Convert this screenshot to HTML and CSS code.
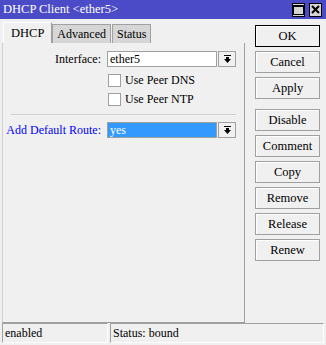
FILE: index.html
```html
<!DOCTYPE html>
<html>
<head>
    <title>DHCP Client &lt;ether5&gt;</title>
    <link rel="stylesheet" href="styles.css">
</head>
<body>
    <div class="titlebar">
        <span class="title">DHCP Client &lt;ether5&gt;</span>
        <div class="winbtns">
            <span class="winbtn">
                <svg width="11" height="10" viewBox="0 0 11 10"><rect x="0.5" y="0.5" width="10" height="9" fill="none" stroke="#000"/><rect x="0" y="0" width="11" height="2" fill="#000"/></svg>
            </span>
            <span class="winbtn">
                <svg width="9" height="9" viewBox="0 0 9 9"><path d="M1 1 L8 8 M8 1 L1 8" stroke="#000" stroke-width="2"/></svg>
            </span>
        </div>
    </div>

    <div class="main">
        <div class="left">
            <div class="tabs">
                <div class="tab active">DHCP</div>
                <div class="tab">Advanced</div>
                <div class="tab">Status</div>
            </div>
            <div class="panel">
                <div class="row">
                    <label class="lbl">Interface:</label>
                    <div class="field">ether5</div>
                    <span class="drop">
                        <svg width="9" height="9" viewBox="0 0 9 9"><rect x="1" y="0" width="7" height="1" fill="#000"/><rect x="3" y="2" width="3" height="2" fill="#000"/><path d="M1 4 L8 4 L4.5 8 Z" fill="#000"/></svg>
                    </span>
                </div>
                <div class="check-row"><span class="box"></span>Use Peer DNS</div>
                <div class="check-row"><span class="box"></span>Use Peer NTP</div>
                <div class="sep"></div>
                <div class="row">
                    <label class="lbl blue">Add Default Route:</label>
                    <div class="field selected">yes</div>
                    <span class="drop">
                        <svg width="9" height="9" viewBox="0 0 9 9"><rect x="1" y="0" width="7" height="1" fill="#000"/><rect x="3" y="2" width="3" height="2" fill="#000"/><path d="M1 4 L8 4 L4.5 8 Z" fill="#000"/></svg>
                    </span>
                </div>
            </div>
        </div>

        <div class="buttons">
            <button class="btn default">OK</button>
            <button class="btn">Cancel</button>
            <button class="btn">Apply</button>
            <button class="btn spaced">Disable</button>
            <button class="btn">Comment</button>
            <button class="btn">Copy</button>
            <button class="btn">Remove</button>
            <button class="btn">Release</button>
            <button class="btn">Renew</button>
        </div>
    </div>

    <div class="statusbar">
        <div class="cell first">enabled</div>
        <div class="cell">Status: bound</div>
    </div>
</body>
</html>
```

FILE: styles.css
```css
body {
    margin: 0;
    width: 326px;
    height: 345px;
    overflow: hidden;
    background-color: #f0f0f0;
    font-family: "Liberation Serif", "Times New Roman", serif;
    font-size: 12px;
    color: #000;
}
.titlebar {
    height: 19px;
    background-color: #4b4bc8;
    color: white;
    display: flex;
    align-items: center;
    justify-content: space-between;
    padding-left: 3px;
    font-size: 12.5px;
}
.winbtns {
    display: flex;
    gap: 4px;
    margin-right: 4px;
}
.winbtn {
    width: 11px;
    height: 12px;
    border: 1px solid #000;
    background: #d4d4d4;
    display: flex;
    align-items: center;
    justify-content: center;
}
.main {
    display: flex;
    height: 304px;
    padding: 3px 0 0 2px;
    box-sizing: border-box;
}
.left {
    width: 243px;
    display: flex;
    flex-direction: column;
}
.tabs {
    display: flex;
    height: 21px;
    padding-left: 1px;
    align-items: flex-end;
}
.tab {
    height: 18px;
    line-height: 18px;
    padding: 0 4px;
    background: #d6d6d6;
    border: 1px solid #a0a0a0;
    border-bottom: none;
    margin-right: 1px;
}
.tab.active {
    height: 20px;
    line-height: 21px;
    background: #f0f0f0;
    border-color: #fff #a0a0a0 #fff #fff;
    padding: 0 7px 0 7px;
    font-size: 12.5px;
    margin-right: 0;
}
.panel {
    height: 278px;
    border: 1px solid #a0a0a0;
    border-top: none;
    border-left-color: #d0d0d0;
    padding: 8px 8px 0 8px;
}
.row {
    display: flex;
    align-items: center;
    height: 16px;
}
.lbl {
    width: 90px;
    flex-shrink: 0;
    display: flex;
    justify-content: flex-end;
    white-space: nowrap;
    margin-right: 6px;
}
.blue {
    color: #0000ff;
}
.field {
    width: 106px;
    height: 14px;
    line-height: 14px;
    background: white;
    border: 1px solid #a0a0a0;
    padding-left: 2px;
}
.field.selected {
    background: #3399ff;
    color: white;
}
.drop {
    width: 16px;
    height: 14px;
    margin-left: 1px;
    border: 1px solid #a0a0a0;
    background: #f0f0f0;
    display: flex;
    align-items: center;
    justify-content: center;
}
.check-row {
    display: flex;
    align-items: center;
    height: 13px;
    margin-left: 97px;
    margin-top: 7px;
}
.check-row + .check-row {
    margin-top: 6px;
}
.box {
    width: 11px;
    height: 11px;
    border: 1px solid #a0a0a0;
    background: white;
    margin-right: 4px;
}
.sep {
    height: 1px;
    background: #d0d0d0;
    margin: 8px 0 7px 0;
}
.buttons {
    width: 65px;
    margin-left: 10px;
    padding-top: 3px;
    display: flex;
    flex-direction: column;
    gap: 4px;
}
.btn {
    height: 22px;
    padding: 0;
    background: #f0f0f0;
    border: 1px solid #a0a0a0;
    box-shadow: inset 1px 1px 0 #fff;
    font-family: "Liberation Serif", "Times New Roman", serif;
    font-size: 12.5px;
    color: #000;
}
.btn.default {
    border-color: #000;
}
.btn.spaced {
    margin-top: 6px;
}
.statusbar {
    display: flex;
    gap: 2px;
    padding: 0 2px;
    height: 20px;
}
.cell {
    flex: 1;
    border-top: 1px solid #a0a0a0;
    border-left: 1px solid #a0a0a0;
    border-bottom: 1px solid #fff;
    border-right: 1px solid #fff;
    padding-left: 2px;
    line-height: 19px;
}
.cell.first {
    flex: none;
    width: 102px;
}
```
